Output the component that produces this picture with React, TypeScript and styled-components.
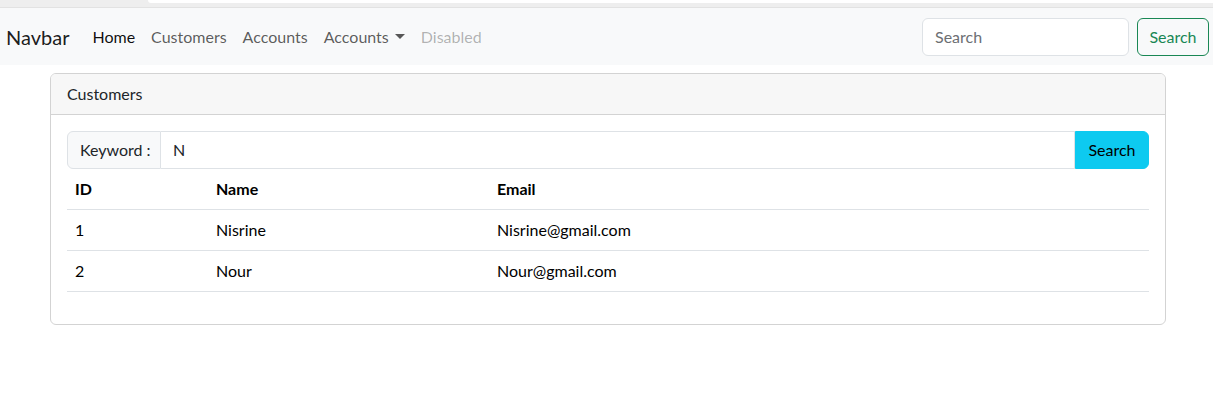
import React from "react";
import styled, { createGlobalStyle } from "styled-components";

const GlobalStyle = createGlobalStyle`
  html, body { margin: 0; padding: 0; background: #fff; }
  body {
    font-family: Lato, "Liberation Sans", sans-serif;
    font-size: 16px;
    line-height: 1.5;
    color: #212529;
  }
  * { box-sizing: border-box; }
`;

const ChromeStrip = styled.div`
  display: flex;
  align-items: flex-start;
  height: 8px;
  background: #eeeeee;
  border-bottom: 1px solid #e2e2e2;
`;

const ChromeGap = styled.div`
  width: 148px;
`;

const ChromeTab = styled.div`
  flex: 1;
  height: 3px;
  background: #ffffff;
  border-bottom-left-radius: 6px;
`;

const NavBar = styled.nav`
  display: flex;
  align-items: center;
  height: 57px;
  padding: 0 4px 0 6px;
  background: #f8f9fa;
`;

const Brand = styled.a`
  font-size: 20px;
  color: rgba(0, 0, 0, 0.9);
  margin-right: 15px;
  text-decoration: none;
`;

const NavList = styled.ul`
  display: flex;
  list-style: none;
  margin: 0;
  padding: 0;
`;

const NavLink = styled.a<{ $state?: "active" | "disabled" }>`
  display: flex;
  align-items: center;
  padding: 8px;
  text-decoration: none;
  color: ${(p) =>
    p.$state === "active"
      ? "rgba(0,0,0,0.95)"
      : p.$state === "disabled"
      ? "rgba(0,0,0,0.3)"
      : "rgba(0,0,0,0.65)"};
`;

const Caret = styled.span`
  display: inline-block;
  margin-left: 6px;
  border-top: 5px solid rgba(0, 0, 0, 0.65);
  border-left: 5px solid transparent;
  border-right: 5px solid transparent;
`;

const SearchForm = styled.form`
  display: flex;
  gap: 8px;
  margin-left: auto;
`;

const NavInput = styled.input`
  width: 207px;
  height: 38px;
  padding: 6px 12px;
  font: inherit;
  border: 1px solid #dee2e6;
  border-radius: 6px;
  background: #fff;
  &::placeholder { color: #6c6f73; }
`;

const OutlineButton = styled.button`
  height: 38px;
  width: 72px;
  padding: 6px 0;
  font: inherit;
  color: #198754;
  background: transparent;
  border: 1px solid #198754;
  border-radius: 6px;
`;

const Container = styled.main`
  padding: 8px 47px 0 50px;
`;

const Card = styled.section`
  border: 1px solid #d3d3d3;
  border-radius: 6px;
  overflow: hidden;
`;

const CardHeader = styled.div`
  padding: 8px 16px;
  background: #f7f7f7;
  border-bottom: 1px solid #d3d3d3;
  color: #212529;
`;

const CardBody = styled.div`
  padding: 16px;
`;

const InputGroup = styled.div`
  display: flex;
  height: 38px;
`;

const GroupLabel = styled.span`
  display: flex;
  align-items: center;
  width: 94px;
  padding: 6px 12px;
  background: #f8f9fa;
  border: 1px solid #dee2e6;
  border-radius: 6px 0 0 6px;
  color: #212529;
  white-space: nowrap;
`;

const GroupInput = styled.input`
  flex: 1;
  min-width: 0;
  padding: 6px 12px;
  font: inherit;
  color: #212529;
  border: 1px solid #dee2e6;
  border-left: none;
  outline: none;
`;

const InfoButton = styled.button`
  width: 74px;
  font: inherit;
  color: #000;
  background: #0dcaf0;
  border: 1px solid #0dcaf0;
  border-radius: 0 6px 6px 0;
`;

const Table = styled.table`
  width: 100%;
  border-collapse: collapse;
  margin-bottom: 16px;
  color: #000;
`;

const Th = styled.th<{ $w?: number }>`
  width: ${(p) => (p.$w ? `${p.$w}px` : "auto")};
  text-align: left;
  font-weight: 700;
  padding: 8px;
  border-bottom: 1px solid #dee2e6;
`;

const Td = styled.td`
  padding: 8px;
  border-bottom: 1px solid #dee2e6;
`;

const customers = [
  { id: 1, name: "Nisrine", email: "Nisrine@gmail.com" },
  { id: 2, name: "Nour", email: "Nour@gmail.com" },
];

export default function App() {
  return (
    <>
      <GlobalStyle />
      <ChromeStrip>
        <ChromeGap />
        <ChromeTab />
      </ChromeStrip>
      <NavBar>
        <Brand href="#">Navbar</Brand>
        <NavList>
          <li><NavLink $state="active" href="#">Home</NavLink></li>
          <li><NavLink href="#">Customers</NavLink></li>
          <li><NavLink href="#">Accounts</NavLink></li>
          <li><NavLink href="#">Accounts<Caret /></NavLink></li>
          <li><NavLink $state="disabled">Disabled</NavLink></li>
        </NavList>
        <SearchForm onSubmit={(e) => e.preventDefault()}>
          <NavInput type="search" placeholder="Search" />
          <OutlineButton type="submit">Search</OutlineButton>
        </SearchForm>
      </NavBar>
      <Container>
        <Card>
          <CardHeader>Customers</CardHeader>
          <CardBody>
            <InputGroup>
              <GroupLabel>Keyword :</GroupLabel>
              <GroupInput defaultValue="N" />
              <InfoButton>Search</InfoButton>
            </InputGroup>
            <Table>
              <thead>
                <tr>
                  <Th $w={141}>ID</Th>
                  <Th $w={281}>Name</Th>
                  <Th>Email</Th>
                </tr>
              </thead>
              <tbody>
                {customers.map((c) => (
                  <tr key={c.id}>
                    <Td>{c.id}</Td>
                    <Td>{c.name}</Td>
                    <Td>{c.email}</Td>
                  </tr>
                ))}
              </tbody>
            </Table>
          </CardBody>
        </Card>
      </Container>
    </>
  );
}
